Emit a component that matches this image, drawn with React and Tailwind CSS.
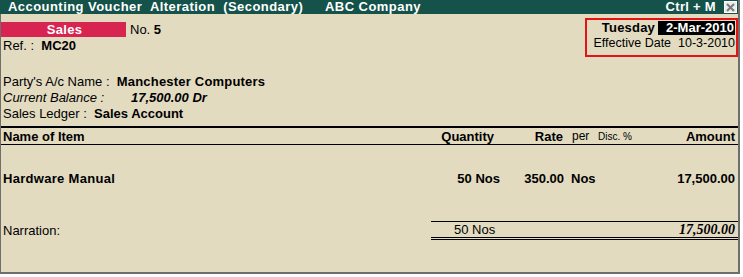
import React from "react";

export default function App() {
  const font = "font-['Liberation_Sans',Arial,Helvetica,sans-serif]";
  return (
    <div className={`w-[743px] h-[277px] bg-white ${font} text-[13px] text-black`}>
      <div className="w-[740px] h-[274px] bg-[#e2dbc0] border-l border-r-2 border-b-2 border-[#6e6e6e] flex flex-col">
        {/* title bar */}
        <div className="h-[14px] bg-[#14524a] text-white font-bold text-[13px] leading-[14px] flex items-center -ml-px">
          <span className="w-[325px] pl-[8px] whitespace-pre tracking-[0.45px]">Accounting Voucher  Alteration  (Secondary)</span>
          <span className="tracking-[0.45px]">ABC Company</span>
          <span className="ml-auto mr-[8px] tracking-[0.3px]">Ctrl + M</span>
          <div className="w-[13px] h-[12px] bg-[#ececec] border border-white flex items-center justify-center mr-[1px]">
            <svg width="9" height="9" viewBox="0 0 9 9">
              <path d="M1 1 L8 8 M8 1 L1 8" stroke="#7a7a7a" strokeWidth="2" />
            </svg>
          </div>
        </div>

        {/* top area */}
        <div className="flex justify-between pt-[4px]">
          <div className="pt-[4px]">
            <div className="flex items-center h-[15px]">
              <div className="w-[125px] h-[15px] bg-[#d82450] text-white font-bold text-center leading-[15px] pl-[2px] tracking-[0.3px]">Sales</div>
              <span className="ml-[4px]">No. <b>5</b></span>
            </div>
            <div className="h-[17px] leading-[17px] pl-[2px] whitespace-pre">
              Ref. :  <b>MC20</b>
            </div>
          </div>
          <div className="w-[153px] h-[39px] border-2 border-[#e41414] flex flex-col items-end pr-[1px]">
            <div className="flex items-center mt-[1px] h-[14px]">
              <span className="font-bold mr-[3px] tracking-[0.2px]">Tuesday</span>
              <span className="bg-black text-white font-bold h-[14px] leading-[14px] w-[77px] text-right pr-[1px]">2-Mar-2010</span>
            </div>
            <div className="h-[17px] leading-[17px] whitespace-pre text-[12.5px]">Effective Date  10-3-2010</div>
          </div>
        </div>

        {/* party */}
        <div className="mt-[17px] pl-[2px] leading-[16px]">
          <div className="h-[16px] whitespace-pre">
            Party's A/c Name :  <b className="tracking-[0.2px]">Manchester Computers</b>
          </div>
          <div className="h-[16px] italic flex">
            <span className="w-[128px]">Current Balance :</span>
            <b>17,500.00 Dr</b>
          </div>
          <div className="h-[16px] whitespace-pre">
            Sales Ledger :  <b>Sales Account</b>
          </div>
        </div>

        {/* table */}
        <div className="mt-[4px] border-t-2 border-black" />
        <div className="grid grid-cols-[430px_70px_63px_33px_43px_1fr] h-[17px] leading-[17px] border-b border-black font-bold">
          <div className="pl-[2px]">Name of Item</div>
          <div className="text-right pr-[7px]">Quantity</div>
          <div className="text-right pr-[1px]">Rate</div>
          <div className="pl-[8px] font-normal text-[12px]">per</div>
          <div className="pl-[1px] font-normal text-[10px]">Disc. %</div>
          <div className="text-right pr-[3px]">Amount</div>
        </div>

        <div className="grid grid-cols-[430px_70px_63px_33px_43px_1fr] h-[16px] leading-[16px] font-bold mt-[26px]">
          <div className="pl-[2px] tracking-[0.3px]">Hardware Manual</div>
          <div className="text-right pr-[1px]">50 Nos</div>
          <div className="text-right">350.00</div>
          <div className="pl-[7px]">Nos</div>
          <div></div>
          <div className="text-right pr-[3px]">17,500.00</div>
        </div>

        <div className="grid grid-cols-[430px_1fr] mt-[34px]">
          <div className="pl-[2px] pt-[2px] leading-[16px]">Narration:</div>
          <div className="border-t border-b-[3px] border-double border-black h-[19px] flex items-center">
            <span className="pl-[23px] leading-[15px]">50 Nos</span>
            <span className="ml-auto pr-[3px] leading-[15px] font-['Liberation_Serif','Times_New_Roman',serif] font-bold italic text-[14px]">17,500.00</span>
          </div>
        </div>
      </div>
    </div>
  );
}
